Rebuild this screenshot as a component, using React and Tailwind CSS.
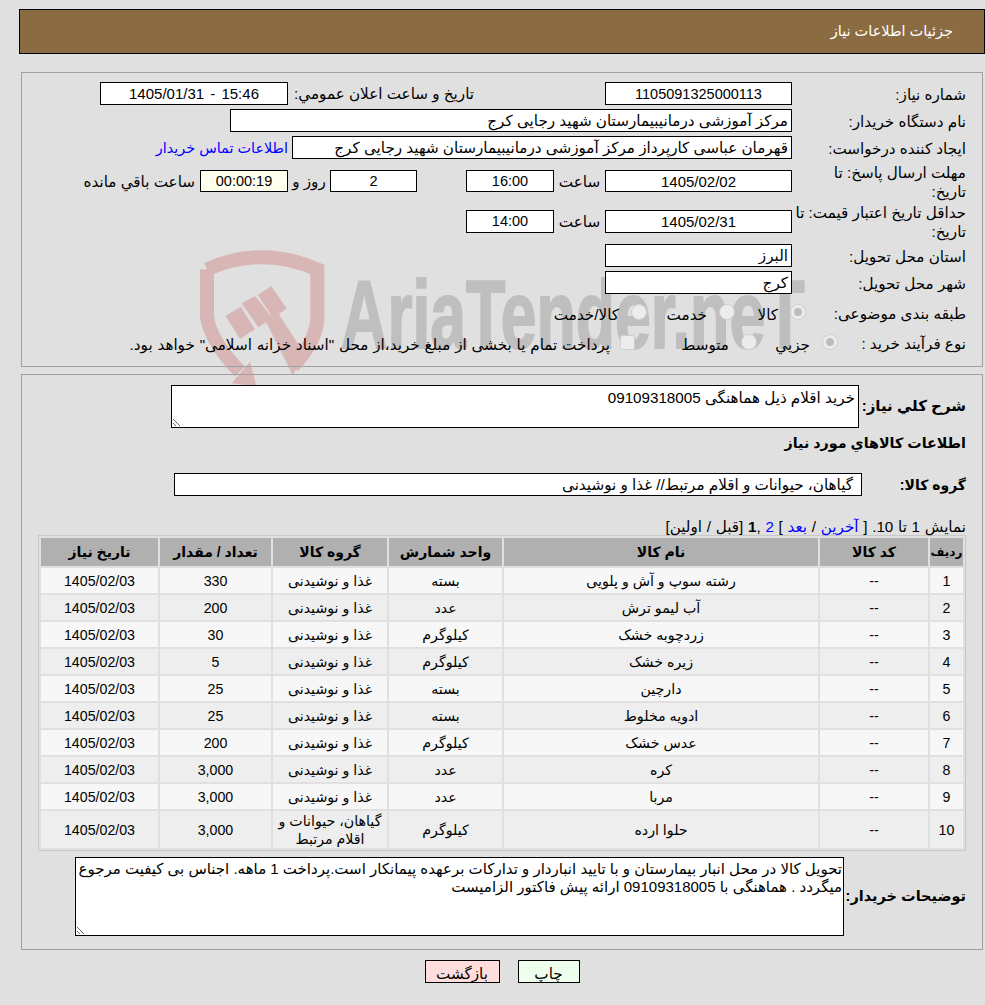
import React from 'react';

const font = "font-['Liberation_Sans','DejaVu_Sans',sans-serif]";
const num = 'text-[14.5px]';
const date = 'text-[15px]';

const rows = [
    ['1', '--', 'رشته سوپ و آش و پلویی', 'بسته', 'غذا و نوشیدنی', '330', '1405/02/03'],
    ['2', '--', 'آب لیمو ترش', 'عدد', 'غذا و نوشیدنی', '200', '1405/02/03'],
    ['3', '--', 'زردچوبه خشک', 'کیلوگرم', 'غذا و نوشیدنی', '30', '1405/02/03'],
    ['4', '--', 'زیره خشک', 'کیلوگرم', 'غذا و نوشیدنی', '5', '1405/02/03'],
    ['5', '--', 'دارچین', 'بسته', 'غذا و نوشیدنی', '25', '1405/02/03'],
    ['6', '--', 'ادویه مخلوط', 'بسته', 'غذا و نوشیدنی', '25', '1405/02/03'],
    ['7', '--', 'عدس خشک', 'کیلوگرم', 'غذا و نوشیدنی', '200', '1405/02/03'],
    ['8', '--', 'کره', 'عدد', 'غذا و نوشیدنی', '3,000', '1405/02/03'],
    ['9', '--', 'مربا', 'عدد', 'غذا و نوشیدنی', '3,000', '1405/02/03'],
    ['10', '--', 'حلوا ارده', 'کیلوگرم', 'گیاهان، حیوانات و اقلام مرتبط', '3,000', '1405/02/03'],
];

const headers = [
    ['ردیف', 'w-[33px] text-[12px]'],
    ['کد کالا', 'w-[108px] text-[14px]'],
    ['نام کالا', 'w-[314px] text-[14px]'],
    ['واحد شمارش', 'w-[113px] text-[14px]'],
    ['گروه کالا', 'w-[114px] text-[14px]'],
    ['تعداد / مقدار', 'w-[111px] text-[14px]'],
    ['تاریخ نیاز', 'w-[117px] text-[14px]'],
];

function Field({ className = '', children }) {
    return (
        <div className={`flex items-center border border-black bg-white px-[3px] pt-[2px] whitespace-nowrap overflow-hidden ${className}`}>
            {children}
        </div>
    );
}

function Label({ className = 'w-[174px]', children }) {
    return <div className={`shrink-0 pt-[2px] leading-[19px] ${className}`}>{children}</div>;
}

function Radio({ checked }) {
    return (
        <span className="flex h-[16px] w-[16px] shrink-0 items-center justify-center rounded-full border border-[#d0d0d0] bg-[#ececec]">
            {checked && <span className="h-[8px] w-[8px] rounded-full bg-[#bdbdbd]"></span>}
        </span>
    );
}

function Option({ width, checked, label }) {
    return (
        <div className={`flex shrink-0 items-center gap-[12px] ${width}`}>
            <Radio checked={checked} />
            <span className="mt-[6px]">{label}</span>
        </div>
    );
}

function Watermark() {
    return (
        <div dir="ltr" className="absolute left-[190px] top-[240px] z-0 flex h-[160px] w-[640px] select-none">
            <svg className="h-[160px] w-[150px] shrink-0" viewBox="0 0 450 480">
                <path d="M51 88 Q215 15 382 88 L382 240 Q375 310 308 378 M51 88 L51 230 Q62 305 150 395" fill="none" stroke="#d9b6b6" strokeWidth="42" />
                <path d="M180 365 L200 440 L125 430 Z" fill="#d9b6b6" />
                <path d="M225 240 L262 215 L345 345 L308 405 Z" fill="#d9b6b6" />
                <path d="M107 228 L152 200 L195 268 L150 297 Z" fill="#d9b6b6" />
                <path d="M155 190 L195 168 L248 235 L205 262 Z" fill="#d9b6b6" />
                <path d="M203 165 L243 138 L290 205 L250 235 Z" fill="#d9b6b6" />
            </svg>
            <span className="mt-[20px] ml-[1px] origin-left scale-x-[0.67] font-['Liberation_Sans',sans-serif] text-[96px] leading-[110px] font-bold whitespace-nowrap text-[#bfbfbf] [-webkit-text-stroke:2px_#bfbfbf]">
                AriaTender.neT
            </span>
        </div>
    );
}

export default function App() {
    return (
        <div dir="rtl" className={`relative h-[1005px] overflow-hidden bg-[#e0e0e0] pt-[9px] text-[15.2px] text-black ${font}`}>
            <Watermark />

            <div className="relative z-10">
                <div className="ml-[19px] flex h-[45px] items-center border border-black bg-[#8b6c42] pr-[31px] text-[14.5px] text-white">
                    جزئیات اطلاعات نیاز
                </div>

                {/* مشخصات نیاز */}
                <div className="mt-[18px] mr-[2px] ml-[21px] h-[295px] border border-[#a0a0a0] pt-[9px] pr-[16px]">
                    <div className="flex h-[23px] items-center">
                        <Label>شماره نیاز:</Label>
                        <Field className={`h-[23px] w-[187px] justify-center ${num}`}>1105091325000113</Field>
                        <div className="w-[317px] shrink-0 pt-[2px] pr-[131px] whitespace-nowrap">تاریخ و ساعت اعلان عمومي:</div>
                        <Field className={`h-[23px] w-[188px] justify-center [word-spacing:2px] ${date}`}>15:46 - 1405/01/31</Field>
                    </div>
                    <div className="mt-[4px] flex h-[23px] items-center">
                        <Label>نام دستگاه خریدار:</Label>
                        <Field className="h-[23px] w-[562px]">مرکز آموزشی درمانیبیمارستان شهید رجایی کرج</Field>
                    </div>
                    <div className="mt-[4px] flex h-[23px] items-center">
                        <Label>ایجاد کننده درخواست:</Label>
                        <Field className="h-[23px] w-[500px]">قهرمان عباسی کارپرداز مرکز آموزشی درمانیبیمارستان شهید رجایی کرج</Field>
                        <a href="#" className="mr-[4px] pt-[2px] text-[14.4px] whitespace-nowrap text-[#0000ff]">اطلاعات تماس خریدار</a>
                    </div>
                    <div className="mt-[4px] flex h-[36px] items-center">
                        <Label>مهلت ارسال پاسخ: تا<br />تاریخ:</Label>
                        <Field className={`h-[22px] w-[187px] justify-center ${date}`}>1405/02/02</Field>
                        <div className="w-[51px] shrink-0 pt-[2px] text-center">ساعت</div>
                        <Field className={`h-[22px] w-[88px] justify-center ${num}`}>16:00</Field>
                        <Field className={`mr-[49px] h-[22px] w-[87px] justify-center ${num}`}>2</Field>
                        <div className="w-[42px] shrink-0 pt-[2px] text-center">روز و</div>
                        <Field className={`h-[22px] w-[88px] justify-center !bg-[#ffffee] ${num}`}>00:00:19</Field>
                        <div className="mr-[5px] pt-[2px] whitespace-nowrap">ساعت باقي مانده</div>
                    </div>
                    <div className="mt-[4px] flex h-[36px] items-center">
                        <Label>حداقل تاریخ اعتبار قیمت: تا<br />تاریخ:</Label>
                        <Field className={`h-[23px] w-[187px] justify-center ${date}`}>1405/02/31</Field>
                        <div className="w-[51px] shrink-0 pt-[2px] text-center">ساعت</div>
                        <Field className={`h-[23px] w-[88px] justify-center ${num}`}>14:00</Field>
                    </div>
                    <div className="mt-[5px] flex h-[23px] items-center">
                        <Label>استان محل تحویل:</Label>
                        <Field className="h-[23px] w-[187px]">البرز</Field>
                    </div>
                    <div className="mt-[4px] flex h-[23px] items-center">
                        <Label>شهر محل تحویل:</Label>
                        <Field className="h-[23px] w-[187px]">کرج</Field>
                    </div>
                    <div className="mt-[7px] flex h-[22px] items-center">
                        <Label className="w-[160px] whitespace-nowrap">طبقه بندی موضوعی:</Label>
                        <Option width="w-[71px]" checked label="کالا" />
                        <Option width="w-[88px]" label="خدمت" />
                        <Option width="w-[100px]" label="کالا/خدمت" />
                    </div>
                    <div className="mt-[8px] flex h-[22px] items-center">
                        <Label className="w-[128px] whitespace-nowrap">نوع فرآیند خرید :</Label>
                        <Option width="w-[81px]" checked label="جزيي" />
                        <Option width="w-[122px]" label="متوسط" />
                        <div className="flex items-center gap-[10px] whitespace-nowrap">
                            <span className="h-[15px] w-[15px] shrink-0 rounded-[2px] border border-[#d0d0d0] bg-[#ececec]"></span>
                            <span className="mt-[6px] [word-spacing:0.6px]">پرداخت تمام یا بخشی از مبلغ خرید،از محل "اسناد خزانه اسلامی" خواهد بود.</span>
                        </div>
                    </div>
                </div>

                {/* کالاها */}
                <div className="mt-[7px] mr-[2px] ml-[21px] h-[576px] border border-[#a0a0a0] pt-[10px] pr-[16px]">
                    <div className="flex items-center">
                        <div className="w-[107px] shrink-0 text-[15px] font-bold">شرح کلي نیاز:</div>
                        <textarea
                            readOnly
                            className="h-[43px] w-[688px] border border-black bg-white px-[3px] pt-[1px] pb-0 outline-none"
                            defaultValue="خرید اقلام ذیل هماهنگی 09109318005"
                        />
                    </div>
                    <div className="mt-[4px] text-[14.3px] leading-[22px] font-bold">اطلاعات کالاهاي مورد نیاز</div>
                    <div className="mt-[19px] flex items-center">
                        <div className="w-[104px] shrink-0 pt-[2px] text-[14px] font-bold">گروه کالا:</div>
                        <Field className="h-[23px] w-[688px] !px-[8px]">گیاهان، حیوانات و اقلام مرتبط// غذا و نوشیدنی</Field>
                    </div>
                    <div className="mt-[21px] h-[18px] leading-[20px] whitespace-nowrap [word-spacing:0.5px]">
                        نمایش 1 تا 10. [ <a href="#" className="text-[#0000ff]">آخرین</a> / <a href="#" className="text-[#0000ff]">بعد</a> ] <a href="#" className="text-[#0000ff]">2</a> ,<b>1</b> [قبل / اولین]
                    </div>

                    <table className="w-[928px] table-fixed border-separate border-spacing-[2px] border border-[#c8c8c8] text-center text-[14.2px]">
                        <thead>
                            <tr>
                                {headers.map(([title, width]) => (
                                    <th key={title} className={`h-[28px] bg-[#b0b0b0] p-0 font-bold ${width}`}>{title}</th>
                                ))}
                            </tr>
                        </thead>
                        <tbody>
                            {rows.map((row, i) => (
                                <tr key={row[0]} className={i % 2 === 0 ? 'bg-[#f7f7f7]' : 'bg-[#eeeeee]'}>
                                    {row.map((cell, j) => (
                                        <td key={j} className={`p-0 leading-[18px] ${i === 9 ? 'h-[37px]' : 'h-[25px]'}`}>{cell}</td>
                                    ))}
                                </tr>
                            ))}
                        </tbody>
                    </table>

                    <div className="mt-[6px] flex items-center">
                        <div className="w-[122px] shrink-0 text-[14.5px] font-bold whitespace-nowrap">توضیحات خریدار:</div>
                        <textarea
                            readOnly
                            className="h-[79px] w-[769px] border border-black bg-white px-[1px] pt-[2px] pb-0 text-[15px] leading-[18px] outline-none"
                            defaultValue="تحویل کالا در محل انبار بیمارستان و با تایید انباردار و تدارکات برعهده پیمانکار است.پرداخت 1 ماهه. اجناس بی کیفیت مرجوع میگردد . هماهنگی با 09109318005 ارائه پیش فاکتور الزامیست"
                        />
                    </div>
                </div>

                <div className="mt-[10px] flex justify-center gap-[18px] pl-[19px]">
                    <button className="h-[23px] w-[62px] border border-black bg-[#eeffee] pt-[2px]">چاپ</button>
                    <button className="h-[23px] w-[75px] border border-black bg-[#ffdddd] pt-[2px]">بازگشت</button>
                </div>
            </div>
        </div>
    );
}
